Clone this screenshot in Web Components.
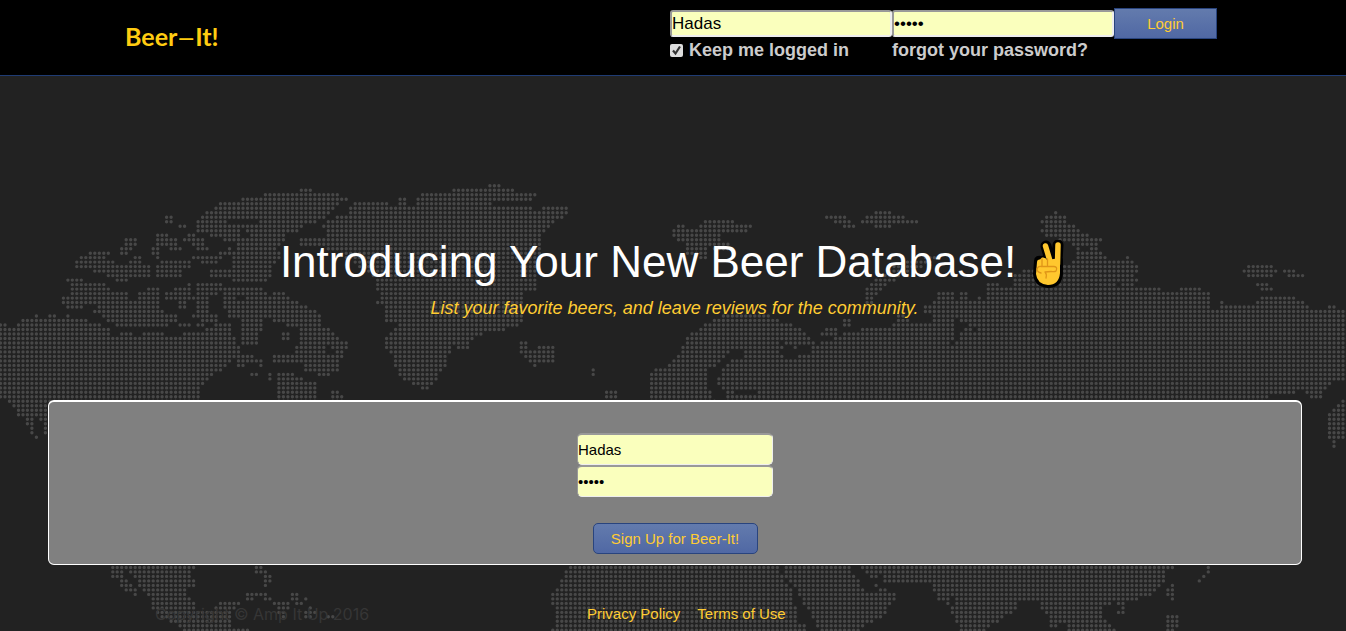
<!DOCTYPE html>
<html lang="en">
<head>
<meta charset="utf-8">
<meta name="viewport" content="width=device-width, initial-scale=1">
<title>Beer-It!</title>
<style>
  html { height: 100%; }
  body {
    margin: 0;
    min-height: 100%;
    background: #222;
    color: #fff;
    font-family: "Liberation Sans", Arial, sans-serif;
    font-size: 15px;
  }
</style>
</head>
<body>
<beer-app></beer-app>

<script>
/* Coastlines, grouped in sheets. Every sheet has its origin in page pixels;
   the points are thirds of a pixel from there. */
const SHEETS = [
  { x: 0, y: 170, land: [
    "0,460 18,460 25,475 45,475 55,455 70,450 80,442 95,445 108,432 122,445 150,433 168,433 180,445 195,445 205,432 212,445 260,445 280,458 325,470 335,496 355,500 370,485 395,485 400,498 425,498 430,485 490,485 495,497 540,497 545,485 570,490 600,485 640,465 660,455 690,465 690,490 715,500 710,520 720,540 705,565 680,580 665,600 640,610 615,640 600,650 597,700 150,700 150,795 130,795 125,765 115,735 100,745 100,775 112,805 100,800 80,770 80,742 55,738 50,720 30,700 0,680",
    "900,55 935,55 940,70 1010,70 1020,82 1050,82 1052,95 1025,100 1000,105 1000,122 985,135 970,150 945,155 920,165 895,185 860,195 860,210 845,220 835,235 840,265 825,280 815,300 810,325 795,335 700,335 695,322 630,322 630,295 690,290 690,275 700,255 705,220 640,200 590,185 580,165 590,150 615,125 640,120 655,97 720,95 725,82 785,82 790,70 895,68",
    "370,205 410,205 410,225 385,250 360,250 360,235 375,225",
    "225,292 225,270 250,260 265,245 330,245 328,258 300,268 345,268 345,282 385,285 395,258 420,258 425,280 450,285 450,318 385,320 380,333 345,333 345,318 320,318 280,305 275,292",
    "455,250 455,232 465,230 470,190 500,190 505,203 530,205 530,225 545,240 520,240 500,228 480,230 480,270 570,270 570,290 545,305 545,320 465,320 465,295 480,285 465,265",
    "495,137 518,137 518,160 495,160",
    "535,163 557,163 557,175 535,175",
    "550,205 570,190 610,210 625,243 590,243 575,225 550,215",
    "575,258 650,258 655,240 680,230 700,220 700,250 650,268 655,282 620,282 575,270",
    "200,323 250,323 250,337 315,340 330,360 380,365 390,380 410,370 440,355 475,352 475,400 490,430 530,432 530,455 500,468 400,470 350,470 340,455 305,450 300,430 280,425 290,400 250,405 250,415 210,415 185,400 190,380 210,375 215,345 200,335",
    "490,370 520,355 555,352 565,338 575,350 575,372 585,392 555,395 570,415 535,415 535,392 495,390",
    "588,338 665,338 665,365 640,375 620,385 625,430 655,440 655,457 610,457 610,475 575,475 600,455 600,445 570,442 590,420 590,400",
    "535,458 580,458 580,470 535,470",
    "680,350 785,352 800,370 820,385 820,370 850,365 870,385 900,395 930,415 970,435 970,465 1000,490 1025,512 1052,515 1052,537 1030,535 1025,562 1010,560 1000,545 985,530 975,540 1015,570 1015,600 985,617 945,612 910,602 905,578 815,578 818,556 880,556 885,530 895,510 895,480 850,460 790,445 785,475 770,522 725,522 722,450 680,440 668,400 668,365",
    "845,485 867,485 867,510 845,510",
    "710,545 725,552 785,565 798,590 780,590 770,578 740,578 735,590 725,605 710,585",
    "750,605 773,605 773,617 750,617",
    "800,605 812,605 812,630 800,630",
    "828,605 880,605 885,620 945,635 945,700 830,700",
    "990,670 1003,658 1012,658 1028,675 1028,700 990,700"
  ], water: [
    "680,146 775,146 775,163 680,163",
    "720,177 737,177 750,200 730,200",
    "655,205 690,225 670,245 655,230",
    "380,385 410,380 410,395 395,395",
    "715,380 735,380 735,392 715,392"
  ]},
  { x: 350, y: 170, land: [
    "410,40 447,40 450,55 487,55 490,68 555,68 555,82 540,95 425,95 425,108 540,108 545,125 570,125 575,110 662,110 662,132 635,147 605,160 590,175 575,190 575,210 560,345 555,362 525,370 525,457 490,470 460,482 395,492 370,512 350,537 330,535 310,525 290,570 285,590 265,605 258,640 240,658 225,658 180,642 140,605 130,570 115,545 100,535 105,500 130,480 140,460 100,457 105,410 75,402 90,375 75,362 75,330 50,310 0,270 -50,240 -155,225 -150,205 -80,205 -65,185 -85,165 -60,145 -10,130 -5,115 20,97 110,95 115,108 140,108 142,83 165,83 175,108 192,108 195,85 210,70 300,68 302,55 405,55",
    "503,535 515,510 528,512 530,530 545,540 570,527 610,527 622,550 610,578 570,578 560,592 545,588 530,575 515,550",
    "718,593 730,593 730,617 718,617",
    "838,632 850,632 850,645 838,645",
    "757,692 760,675 775,660 808,660 808,672 795,692"
  ], water: [] },
  { x: 650, y: 180, land: [
    "165,118 258,118 258,132 310,132 310,145 285,158 220,162 215,185 245,187 240,215 180,205 165,240 145,235 112,220 112,190 85,185 72,168 72,145 90,132 110,132 115,148 140,148 140,133 165,133",
    "528,105 592,105 605,125 622,132 622,145 585,145 580,130 555,130 550,118 528,118",
    "637,132 637,118 650,106 675,106 675,92 728,92 730,105 770,108 775,120 808,120 808,132 728,132 728,145 675,145 675,132",
    "640,335 655,320 680,295 725,260 760,240 860,228 860,242 820,260 760,282 725,305 700,330 680,350 670,372 640,370",
    "580,412 593,412 607,430 607,442 585,442",
    "515,467 517,455 535,443 555,445 568,465 560,480 545,480 545,467",
    "5,720 0,640 0,590 10,572 60,552 85,530 100,500 115,470 130,455 165,432 190,418 220,402 280,395 340,400 380,415 415,430 440,440 465,455 485,470 490,490 500,492 545,482 570,472 580,458 615,455 640,443 730,445 735,415 740,400 760,400 770,415 800,430 850,425 850,400 825,400 825,375 850,370 855,350 870,335 917,337 917,365 930,365 930,337 950,337 955,355 980,360 985,347 997,347 1000,360 1010,362 1010,310 1055,310 1055,720"
  ], water: [
    "165,575 185,562 215,545 235,515 275,507 275,530 240,545 215,565 207,590 205,610 220,625 232,650 225,665 195,665 190,640 170,620 180,600",
    "260,628 315,628 315,644 260,644",
    "380,482 395,482 405,495 440,507 450,495 480,500 478,525 440,530 430,548 415,535 400,530 395,515 405,500",
    "890,482 915,478 922,455 912,420 918,402 930,430 955,430 955,442 930,450 930,475 905,495",
    "970,442 985,442 985,456 970,456"
  ]},
  { x: 1000, y: 190, land: [
    "-2,290 45,290 45,255 80,240 100,240 190,225 215,215 230,190 232,175 215,160 205,153 190,153 140,138 122,128 135,105 122,98 122,90 135,78 160,75 162,62 175,62 180,78 200,78 200,100 225,103 242,125 265,130 270,143 308,143 300,160 295,182 310,190 325,210 375,208 378,197 390,197 403,212 415,230 415,245 400,260 415,270 400,287 410,292 482,292 490,305 535,303 540,292 602,292 608,305 630,308 630,345 635,360 655,360 660,332 670,332 680,345 765,345 770,333 785,319 882,319 900,333 925,347 930,358 980,358 985,345 1005,345 1010,358 1045,358 1045,570 1000,570 985,590 968,605 965,625 930,625 915,605 900,600 890,612 810,612 800,628 790,632 790,700 -2,700",
    "726,240 740,225 817,225 830,240 817,263 740,263",
    "848,236 885,236 885,250 912,252 912,263 862,263 860,250 848,250",
    "766,278 803,278 820,293 820,303 782,303 780,290 766,290",
    "1045,623 1020,633 1000,650 982,680 980,745 995,755 995,772 1005,772 1020,747 1045,735"
  ], water: [ "238,168 262,168 262,182 238,182", "350,275 365,275 365,290 350,290" ] },
  { x: 0, y: 540, land: [
    "333,70 585,70 585,82 575,92 572,112 585,118 585,138 560,145 560,165 572,180 590,200 600,213 640,213 655,195 668,182 718,182 718,195 702,215 695,245 700,262 745,262 745,275 560,275 535,260 510,245 490,235 465,215 455,195 455,170 430,152 415,135 400,105 385,90 368,85 370,112 333,112",
    "360,115 380,115 395,130 400,142 412,155 412,167 400,167 395,155 375,152 360,138",
    "762,70 785,75 812,103 812,125 800,140 788,138 790,115 765,95",
    "735,155 800,155 800,165 815,168 812,180 790,178 785,167 755,180 735,180",
    "815,180 868,180 865,207 830,207 830,194 815,192",
    "870,153 892,153 892,178 907,182 905,194 883,194 880,180 870,180",
    "908,167 922,167 922,180 908,180",
    "830,208 855,218 855,235 838,232",
    "908,208 922,208 922,194 934,194 947,215 935,235 908,230",
    "975,217 1000,222 1000,235 978,235"
  ], water: []},
  { x: 450, y: 550, land: [
    "380,40 350,55 345,80 325,100 320,115 300,135 295,160 310,165 310,230 295,232 295,245 1075,245 1070,230 1045,215 1040,180 1030,160 1025,115 1000,90 990,40",
    "1000,40 1190,40 1205,65 1225,85 1240,110 1245,122 1280,122 1275,95 1290,115 1320,120 1340,135 1340,150 1320,170 1290,205 1250,225 1230,245 1105,245 1100,220 1070,175 1050,145 1025,100 1005,75"
  ], water: []},
  { x: 896, y: 550, land: [
    "-113,40 -95,75 -60,85 -50,68 -35,97 95,97 115,120 130,150 155,163 165,165 165,185 180,215 190,245 275,245 280,230 300,225 320,200 355,188 365,150 430,148 440,178 460,195 462,230 485,230 495,215 515,230 520,245 660,245 650,228 630,215 620,195 625,175 650,155 725,150 765,135 790,115 810,92 815,65 835,55 835,40",
    "662,150 688,150 688,190 662,190 662,178 675,170 662,163",
    "810,115 825,97 837,97 837,150 825,150 822,137 810,137",
    "810,205 825,190 835,190 848,205 848,230 835,243 810,243",
    "930,43 944,43 944,68 930,82 915,97 904,97 904,85 920,70 932,60"
  ], water: [ "165,145 178,145 178,162 165,162" ] }
];

const parse = s => s.split(" ").map(p => p.split(",").map(Number));

function inside(poly, x, y) {
  let hit = false;
  for (let i = 0, j = poly.length - 1; i < poly.length; j = i++) {
    const [xi, yi] = poly[i], [xj, yj] = poly[j];
    if ((yi > y) !== (yj > y) && x < (xj - xi) * (y - yi) / (yj - yi) + xi) hit = !hit;
  }
  return hit;
}

function dotPath() {
  const sheets = SHEETS.map(s => ({ ...s, land: s.land.map(parse), water: s.water.map(parse) }));
  const pitch = 4.49;
  let d = "";
  for (let row = 0; row < 102; row++) {
    const y = 185.8 + row * pitch;
    for (let col = 0; col < 302; col++) {
      const x = 0.5 + col * pitch;
      const on = sheets.some(s => {
        const u = (x - s.x) * 3, v = (y - s.y) * 3;
        return s.land.some(p => inside(p, u, v)) && !s.water.some(p => inside(p, u, v));
      });
      if (on) d += `M${x.toFixed(1)} ${y.toFixed(1)}h0`;
    }
  }
  return d;
}

function define(name, html, ready) {
  const template = document.createElement("template");
  template.innerHTML = html;
  customElements.define(name, class extends HTMLElement {
    constructor() {
      super();
      this.attachShadow({ mode: "open" }).append(template.content.cloneNode(true));
    }
    connectedCallback() { if (ready) ready.call(this, this.shadowRoot); }
  });
}

define("world-map", `
  <style>
    :host { display: block; overflow: hidden; }
    svg { display: block; width: 100%; height: 100%; }
    path { fill: none; stroke: #484848; stroke-width: 3.4; stroke-linecap: round; }
  </style>
  <svg viewBox="0 0 1346 631" preserveAspectRatio="xMidYMin slice" aria-hidden="true"><path/></svg>`,
  root => root.querySelector("path").setAttribute("d", dotPath()));

define("text-field", `
  <style>
    :host { display: block; }
    input {
      display: block; box-sizing: border-box; width: 100%; height: var(--field-height, 32px);
      margin: 0; padding: 0;
      border: 2px solid #eee; border-color: #999 #eee #eee #999; border-width: var(--field-border, 2px 1px 1px 1px);
      border-radius: var(--field-radius, 5px);
      background: #faffbd; color: #000; font: inherit;
    }
  </style>
  <input>`,
  function (root) {
    const input = root.querySelector("input");
    input.type = this.getAttribute("type") || "text";
    input.value = this.getAttribute("value") || "";
    input.setAttribute("aria-label", this.getAttribute("label"));
  });

define("blue-button", `
  <style>
    :host { display: block; }
    button {
      display: block; box-sizing: border-box; width: 100%; height: 31px; margin: 0; padding: 0;
      border: 1px solid #29447e; border-radius: var(--button-radius, 0);
      background: linear-gradient(#637bad, #5068a4);
      color: #fc3; font: inherit;
    }
  </style>
  <button type="button"><slot></slot></button>`);

define("site-header", `
  <style>
    :host {
      display: flex; justify-content: space-between; box-sizing: border-box;
      min-height: 76px; padding: 8px 129px 0 125px;
      background: #000; border-bottom: 1px solid #1f3c74;
    }
    .brand { margin-top: 12px; color: #fc1; font: bold 25px/32px Lato, sans-serif; text-decoration: none; }
    .brand span { margin: 0 2px; font-family: "Liberation Sans", sans-serif; font-weight: normal; }
    form { display: grid; grid-template-columns: 222px 222px 103px; align-items: start; align-content: start; }
    text-field { margin-top: 2px; font-size: 17px; --field-height: 27px; --field-radius: 3px; --field-border: 2px; }
    .keep, .forgot { color: #ccc; font-size: 18px; line-height: 22px; font-weight: bold; text-decoration: none; }
    .keep { display: flex; align-items: center; gap: 6px; }
    .keep input { width: 13px; height: 13px; margin: 0; appearance: none; border-radius: 2px; }
    .keep input:checked {
      background: #ddd url('data:image/svg+xml,<svg xmlns="http://www.w3.org/2000/svg" viewBox="0 0 13 13"><path d="M3 6.5 5.5 9.5 10 2.5" fill="none" stroke="%23333" stroke-width="2.2"/></svg>');
    }
  </style>
  <a class="brand" href="#">Beer<span>–</span>It!</a>
  <form>
    <text-field label="User name" value="Hadas"></text-field>
    <text-field label="Password" type="password" value="hadas"></text-field>
    <blue-button>Login</blue-button>
    <label class="keep"><input type="checkbox" checked>Keep me logged in</label>
    <a class="forgot" href="#">forgot your password?</a>
  </form>`);

define("victory-hand", `
  <style>
    :host { display: inline-block; width: 34px; height: 50px; }
    svg { display: block; width: 100%; height: 100%; }
  </style>
  <svg viewBox="0 0 34 50" role="img" aria-label="Victory hand">
    <g stroke-linecap="round" stroke-linejoin="round">
      <g fill="#000" stroke="#000" stroke-width="6">
        <path d="M14 6 18 20M26 5 25 22" stroke-width="11"/>
        <path d="M5 21Q5 18 9 19L22 17 28 20V34Q27 45 16 45 5 44 4 34Z"/>
      </g>
      <path d="M13.500 6 18 21M26 5 25.500 24" stroke="#ffc72e" stroke-width="5.500"/>
      <path d="M5 22Q5 19 8 19.500L10 17.500Q14 17 15 20L28 18V33Q27 45 16 45 5 44 4 34Z" fill="#ffc72e"/>
      <path d="M10 19V26M15.500 19V26M5 29Q6 26 9 26.500H22Q26 27 24 31 23 32 19 31.500L13 32Q15 34 14 38M5 29Q5 32 9 33" fill="none" stroke="#df9518" stroke-width="1.300"/>
    </g>
  </svg>`);

define("hero-banner", `
  <style>
    :host { display: block; padding: 158px 0 0; text-align: center; }
    h1 { display: flex; justify-content: center; align-items: end; gap: 16px; margin: 0; font-size: 44px; line-height: 56px; font-weight: normal; }
    p { margin: 6px 0 0; padding-left: 3px; color: #fc3; font-size: 18px; line-height: 24px; font-style: italic; }
  </style>
  <h1><slot name="title"></slot><victory-hand></victory-hand></h1>
  <p><slot></slot></p>`);

define("signup-panel", `
  <style>
    :host { display: block; margin: 80px 44px 0 48px; }
    form {
      display: flex; flex-direction: column; align-items: center; box-sizing: border-box;
      padding: 31px 0 10px; border: 1px solid #fff; border-top-width: 2px; border-radius: 6px; background: #808080;
    }
    text-field { width: 196px; }
    blue-button { width: 165px; margin-top: 26px; --button-radius: 5px; }
  </style>
  <form>
    <text-field label="User name" value="Hadas"></text-field>
    <text-field label="Password" type="password" value="hadas"></text-field>
    <blue-button>Sign Up for Beer-It!</blue-button>
  </form>`);

define("site-footer", `
  <style>
    :host { display: grid; grid-template-columns: 432px auto; padding: 39px 0 7px 155px; line-height: 20px; }
    small { color: #363636; font: 16px/20px Inter, sans-serif; }
    nav { display: flex; gap: 17px; }
    a { color: #fc3; text-decoration: none; }
  </style>
  <small>Copyright © Amp It Up 2016</small>
  <nav><a href="#">Privacy Policy</a><a href="#">Terms of Use</a></nav>`);

define("beer-app", `
  <style>
    :host { display: block; position: relative; }
    world-map { position: absolute; inset: 0; z-index: -1; }
  </style>
  <world-map></world-map>
  <site-header></site-header>
  <main>
    <hero-banner><span slot="title">Introducing Your New Beer Database!</span>List your favorite beers, and leave reviews for the community.</hero-banner>
    <signup-panel></signup-panel>
  </main>
  <site-footer></site-footer>`);
</script>
</body>
</html>
